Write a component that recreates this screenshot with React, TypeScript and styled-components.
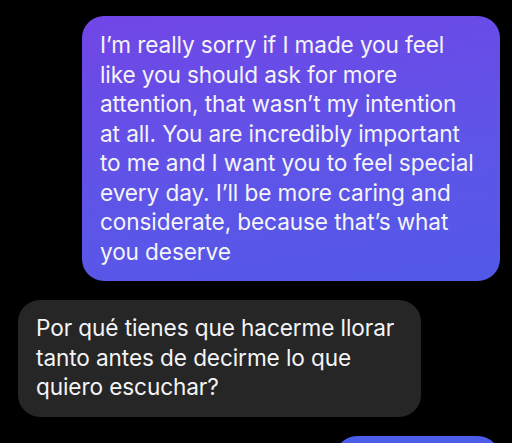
import React from "react";
import styled, {createGlobalStyle} from "styled-components";

const GlobalStyle = createGlobalStyle`
  html, body {
    margin: 0;
    padding: 0;
    background: #000;
  }
  body {
    font-family: Inter, "Noto Sans", sans-serif;
    -webkit-font-smoothing: antialiased;
  }
`;

const StyledThread = styled.div`
  width: 512px;
  height: 443px;
  overflow: hidden;
  background: #000;
  display: flex;
  flex-direction: column;
  gap: 19px;
  padding-top: 16px;
  box-sizing: border-box;
`;

const fills = {
    purple: "linear-gradient(170deg, #7146e6 0%, #5d55e8 60%, #5258e8 100%)",
    blue: "#4b5de9",
    gray: "#262626",
};

const StyledBubble = styled.div<{ $outgoing?: boolean; $width: number; $fill: keyof typeof fills }>`
  align-self: ${({$outgoing}) => $outgoing ? "flex-end" : "flex-start"};
  margin: ${({$outgoing}) => $outgoing ? "0 12px 0 0" : "0 0 0 18px"};
  width: ${({$width}) => $width}px;
  flex-shrink: 0;
  padding: ${({$outgoing}) => $outgoing ? "14px 18px 15px" : "13px 18px 15px"};
  border-radius: 22px;
  box-sizing: border-box;
  color: #f4f4f6;
  font-size: 22.6px;
  line-height: 29.5px;
  letter-spacing: -0.1px;
  background: ${({$fill}) => fills[$fill]};
`;

const StyledLine = styled.span`
  display: block;
  white-space: nowrap;
`;

const apology = [
    "I’m really sorry if I made you feel",
    "like you should ask for more",
    "attention, that wasn’t my intention",
    "at all. You are incredibly important",
    "to me and I want you to feel special",
    "every day. I’ll be more caring and",
    "considerate, because that’s what",
    "you deserve",
];

const reply = [
    "Por qué tienes que hacerme llorar",
    "tanto antes de decirme lo que",
    "quiero escuchar?",
];

const App: React.FC = () => {
    return <>
        <GlobalStyle/>
        <StyledThread>
            <StyledBubble $outgoing $width={418} $fill="purple">
                {apology.map(line => <StyledLine key={line}>{line}</StyledLine>)}
            </StyledBubble>
            <StyledBubble $width={403} $fill="gray">
                {reply.map(line => <StyledLine key={line}>{line}</StyledLine>)}
            </StyledBubble>
            {/* next outgoing bubble, cut off by the bottom of the screen */}
            <StyledBubble $outgoing $width={165} $fill="blue">
                <StyledLine>&nbsp;</StyledLine>
            </StyledBubble>
        </StyledThread>
    </>
}

export default App;
